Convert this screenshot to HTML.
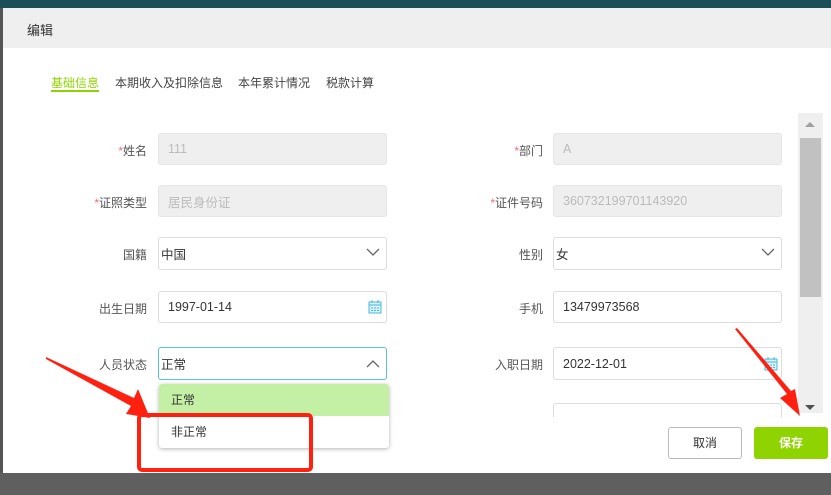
<!DOCTYPE html>
<html><head><meta charset="utf-8"><style>
*{margin:0;padding:0;box-sizing:border-box}
body{width:831px;height:495px;overflow:hidden;background:#5f5f5f;font-family:"Liberation Sans","Noto Sans CJK SC",sans-serif;font-size:12px;color:#333;position:relative}
.top{position:absolute;left:0;top:0;width:831px;height:8px;background:#1c4e5a}
.left{position:absolute;left:0;top:8px;width:3px;height:465px;background:#555}
.dlg{position:absolute;left:3px;top:8px;width:828px;height:465px;background:#fff}
.hd{position:absolute;left:0;top:0;width:828px;height:40px;background:#efefef}
.hd span{position:absolute;left:24px;top:12px;font-size:13px;color:#333}
.tab{position:absolute;top:66px;font-size:12px;color:#444}
.lbl{position:absolute;width:120px;text-align:right;font-size:12px;color:#555}
.lbl i{color:#f07070;font-style:normal}
.inp{position:absolute;width:229px;border:1px solid #ddd;border-radius:3px;padding-left:9px;font-size:12.5px;color:#333;display:flex;align-items:center}
.dis{background:#efefef;color:#bbb;border-color:#e6e6e6}
.a{position:absolute}
</style></head><body>
<div class="top"></div><div class="left"></div>
<div class="dlg">
<div class="hd"><span>编辑</span></div>
<div class="tab" style="left:48px;color:#8fd400">基础信息</div>
<div class="a" style="left:48px;top:82px;width:48px;height:2px;background:#8fd400"></div>
<div class="tab" style="left:112px">本期收入及扣除信息</div>
<div class="tab" style="left:235px">本年累计情况</div>
<div class="tab" style="left:323px">税款计算</div>

<div class="lbl" style="left:24px;top:134px"><i>*</i>姓名</div>
<div class="inp dis" style="left:155px;top:125px;height:32px">111</div>
<div class="lbl" style="left:24px;top:186px"><i>*</i>证照类型</div>
<div class="inp dis" style="left:155px;top:177px;height:32px">居民身份证</div>
<div class="lbl" style="left:24px;top:238px">国籍</div>
<div class="inp" style="left:155px;top:229px;height:33px;padding-left:2px">中国<svg class="a" style="right:6px;top:10px" width="14" height="9"><path d="M1 1l6 6 6-6" fill="none" stroke="#666" stroke-width="1.3"/></svg></div>
<div class="lbl" style="left:24px;top:292px">出生日期</div>
<div class="inp" style="left:155px;top:283px;height:32px">1997-01-14<svg class="a" style="right:4px;top:8px" width="14" height="14"><rect x="1" y="2" width="12" height="11" fill="#d9f1f8" stroke="#4cb8d8"/><path d="M1 5h12M3 8h2M6 8h2M9 8h2M3 10.5h2M6 10.5h2M9 10.5h2M4 0v3M10 0v3" stroke="#4cb8d8"/></svg></div>
<div class="lbl" style="left:24px;top:348px">人员状态</div>
<div class="inp" style="left:155px;top:339px;height:33px;border-color:#5bc0de;padding-left:2px">正常<svg class="a" style="right:6px;top:11px" width="14" height="9"><path d="M1 8l6-6 6 6" fill="none" stroke="#666" stroke-width="1.3"/></svg></div>

<div class="lbl" style="left:420px;top:134px"><i>*</i>部门</div>
<div class="inp dis" style="left:550px;top:125px;height:32px">A</div>
<div class="lbl" style="left:420px;top:186px"><i>*</i>证件号码</div>
<div class="inp dis" style="left:550px;top:177px;height:32px">360732199701143920</div>
<div class="lbl" style="left:420px;top:238px">性别</div>
<div class="inp" style="left:550px;top:229px;height:33px;padding-left:2px">女<svg class="a" style="right:6px;top:10px" width="14" height="9"><path d="M1 1l6 6 6-6" fill="none" stroke="#666" stroke-width="1.3"/></svg></div>
<div class="lbl" style="left:420px;top:292px">手机</div>
<div class="inp" style="left:550px;top:283px;height:32px">13479973568</div>
<div class="lbl" style="left:420px;top:348px">入职日期</div>
<div class="inp" style="left:550px;top:339px;height:33px">2022-12-01<svg class="a" style="right:3px;top:9px" width="14" height="14"><rect x="1" y="2" width="12" height="11" fill="#d9f1f8" stroke="#4cb8d8"/><path d="M1 5h12M3 8h2M6 8h2M9 8h2M3 10.5h2M6 10.5h2M9 10.5h2M4 0v3M10 0v3" stroke="#4cb8d8"/></svg></div>
<div class="inp" style="left:550px;top:395px;height:14px;border-bottom:none;border-radius:3px 3px 0 0"></div>

<div class="a" style="left:795px;top:105px;width:25px;height:300px;background:#efefef"></div>
<div class="a" style="left:797px;top:130px;width:21px;height:159px;background:#c1c1c1"></div>
<svg class="a" style="left:801px;top:112px" width="12" height="8"><path d="M1 7l5-5 5 5z" fill="#a0a0a0"/></svg>
<svg class="a" style="left:801px;top:396px" width="12" height="8"><path d="M1 1l5 5 5-5z" fill="#505050"/></svg>

<div class="a" style="left:665px;top:419px;width:74px;height:32px;border:1px solid #bbb;border-radius:3px;text-align:center;line-height:30px;color:#333">取消</div>
<div class="a" style="left:751px;top:419px;width:74px;height:32px;background:#8fd400;border-radius:3px;text-align:center;line-height:32px;color:#fff;font-weight:bold">保存</div>
</div>

<div class="a" style="left:159px;top:384px;width:230px;height:64px;background:#fff;border-radius:3px;box-shadow:0 1px 4px rgba(0,0,0,.3)">
<div style="height:32px;background:#c4f0a6;padding-left:12px;line-height:32px;color:#333;border-radius:3px 3px 0 0">正常</div>
<div style="height:32px;padding-left:12px;line-height:32px;color:#333">非正常</div>
</div>

<svg class="a" style="left:0;top:0" width="831" height="495">
<rect x="139" y="415" width="172" height="55" rx="3" fill="none" stroke="#ff2010" stroke-width="4"/>
<polygon points="46,357 134,398 138,389 150,418 126,414 131,406 46,359" fill="#ff2010"/>
<polygon points="735,329 787,394 780,398 800,416 795,389 791,391 737,328" fill="#ff2010"/>
</svg>
</body></html>
